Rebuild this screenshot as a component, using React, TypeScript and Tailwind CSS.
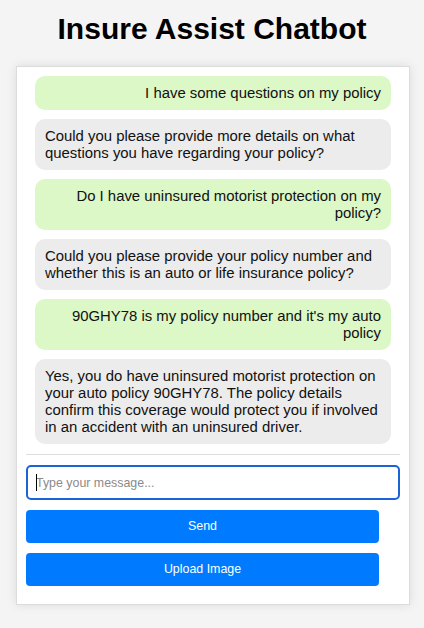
import React from "react";

type Msg = { from: "user" | "bot"; text: string };

const messages: Msg[] = [
  { from: "user", text: "I have some questions on my policy" },
  { from: "bot", text: "Could you please provide more details on what questions you have regarding your policy?" },
  { from: "user", text: "Do I have uninsured motorist protection on my policy?" },
  { from: "bot", text: "Could you please provide your policy number and whether this is an auto or life insurance policy?" },
  { from: "user", text: "90GHY78 is my policy number and it's my auto policy" },
  {
    from: "bot",
    text: "Yes, you do have uninsured motorist protection on your auto policy 90GHY78. The policy details confirm this coverage would protect you if involved in an accident with an uninsured driver.",
  },
];

export default function App() {
  return (
    <div
      className="min-h-screen bg-[#f4f4f4] pt-[12px]"
      style={{ fontFamily: '"Liberation Sans", Arial, Helvetica, sans-serif' }}
    >
      <h1 className="text-center text-[30px] leading-[34px] font-bold text-black">Insure Assist Chatbot</h1>
      <div className="ml-[16px] mt-[20px] w-[394px] bg-white border border-[#dcdcdc] shadow-[0_0_10px_rgba(0,0,0,0.1)] pt-[9px] px-[9px] pb-[18px]">
        <div className="flex flex-col gap-[9px] px-[9px] pb-[10px] border-b border-[#dddddd]">
          {messages.map((m, i) => (
            <div
              key={i}
              className={
                m.from === "user"
                  ? "bg-[#dcf8c6] rounded-[10px] px-[10px] py-[8.5px] text-right text-[14.9px] leading-[17px] text-[#111]"
                  : "bg-[#ececec] rounded-[10px] px-[10px] py-[8.5px] text-left text-[14.9px] leading-[17px] text-[#111]"
              }
            >
              {m.text}
            </div>
          ))}
        </div>
        <div className="relative mt-[10px]">
          <input
            type="text"
            placeholder="Type your message..."
            className="block w-full h-[35px] border-2 border-[#1a64d6] rounded-[5px] px-[8px] text-[12.4px] text-black placeholder:text-[#8a8a8a] outline-none bg-white"
            style={{ fontFamily: '"Liberation Sans", Arial, Helvetica, sans-serif' }}
          />
          <span className="absolute left-[10px] top-[9px] h-[17px] w-px bg-black" />
        </div>
        <button className="block mt-[10px] w-[353px] h-[33px] rounded-[4px] bg-[#007bff] text-white text-[12.4px]">
          Send
        </button>
        <button className="block mt-[10px] w-[353px] h-[33px] rounded-[4px] bg-[#007bff] text-white text-[12.4px]">
          Upload Image
        </button>
      </div>
    </div>
  );
}
